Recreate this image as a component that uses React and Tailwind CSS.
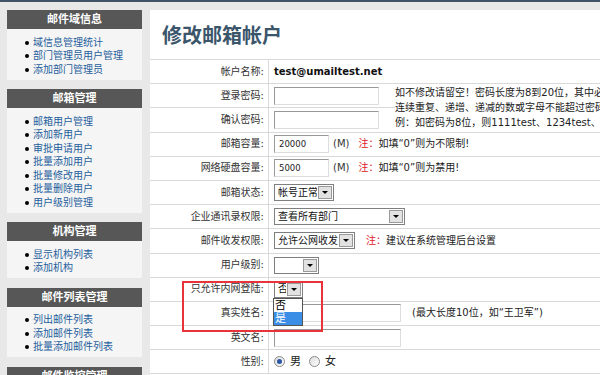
import React from "react";

const menus = [
  { title: "邮件域信息", items: ["域信息管理统计", "部门管理员用户管理", "添加部门管理员"] },
  {
    title: "邮箱管理",
    items: ["邮箱用户管理", "添加新用户", "审批申请用户", "批量添加用户", "批量修改用户", "批量删除用户", "用户级别管理"],
  },
  { title: "机构管理", items: ["显示机构列表", "添加机构"] },
  { title: "邮件列表管理", items: ["列出邮件列表", "添加邮件列表", "批量添加邮件列表"] },
  { title: "邮件监控管理", items: [] },
];

const Menu = ({ title, items }) => (
  <div>
    <div className="h-[19px] bg-[#575757] text-white text-[11px] font-bold flex items-center justify-center">
      {title}
    </div>
    {items.length > 0 && (
      <ul className="bg-[#f5f5f5] pt-[7px] pb-[3px]">
        {items.map((item) => (
          <li key={item} className="flex items-center h-[13.5px] pl-[18px]">
            <span className="w-[4px] h-[4px] rounded-full bg-black mr-[4px]"></span>
            <a className="text-[#1f5e9c]">{item}</a>
          </li>
        ))}
      </ul>
    )}
  </div>
);

const TextInput = ({ w, value }) => (
  <div
    className={`h-[18px] ${w} border border-t-[#999999] border-l-[#999999] border-r-[#dddddd] border-b-[#dddddd] bg-white text-[8.5px] pl-[4px] flex items-center text-[#222]`}
  >
    {value}
  </div>
);

const Select = ({ w, text }) => (
  <div className={`h-[17px] ${w} border border-[#7f7f7f] bg-white flex items-stretch overflow-hidden`}>
    <span className="flex-1 pl-[3px] whitespace-nowrap overflow-hidden flex items-center text-[#111]">{text}</span>
    <span className="w-[14px] m-px bg-[#e2e2e2] border border-[#9a9a9a] flex items-center justify-center shrink-0">
      <span className="w-0 h-0 border-l-[3px] border-r-[3px] border-t-[3px] border-l-transparent border-r-transparent border-t-black"></span>
    </span>
  </div>
);

const Radio = ({ checked }) => (
  <span className="w-[11px] h-[11px] rounded-full border border-[#8a8a8a] bg-gradient-to-br from-[#dcdcdc] to-white flex items-center justify-center">
    {checked && <span className="w-[5px] h-[5px] rounded-full bg-[#2a56a6]"></span>}
  </span>
);

const Label = ({ children }) => (
  <div className="h-[24.2px] border-b border-[#d9d9d9] flex items-center justify-end pr-[4px] text-[#333]">
    {children}
  </div>
);

const Value = ({ children }) => (
  <div className="col-span-2 h-[24.2px] border-b border-l border-[#d9d9d9] flex items-center pl-[5px] whitespace-nowrap">
    {children}
  </div>
);

const Note = ({ children }) => <span className="text-[#e0202a]">注：</span>;

export default function App() {
  return (
    <div className="w-[600px] h-[375px] overflow-hidden bg-[#e8e8e8] border-t-2 border-[#3e5366] font-['DejaVu_Sans','Noto_Sans_CJK_SC',sans-serif] text-[10px] leading-none">
      <div className="flex pt-[8px] pl-[7px] gap-[8px]">
        <aside className="w-[135px] shrink-0 flex flex-col gap-[9.5px]">
          {menus.map((m) => (
            <Menu key={m.title} title={m.title} items={m.items} />
          ))}
        </aside>

        <main className="relative flex-1 bg-white overflow-hidden h-[400px]">
          <div className="h-[49px] flex items-center pl-[12px] text-[20px] font-bold text-[#3b556b] font-['Noto_Sans_CJK_SC',sans-serif]">
            修改邮箱帐户
          </div>

          <div className="grid grid-cols-[118px_127px_1fr] border-t border-[#d9d9d9]">
            <Label>帐户名称:</Label>
            <Value>
              <span className="font-bold text-[#111]">test@umailtest.net</span>
            </Value>

            <Label>登录密码:</Label>
            <div className="h-[24.2px] border-b border-l border-[#d9d9d9] flex items-center pl-[5px]">
              <TextInput w="w-[105px]" />
            </div>
            <div className="row-span-2 border-b border-[#d9d9d9] flex flex-col justify-center whitespace-nowrap leading-[15px] text-[#222]">
              <span>如不修改请留空！密码长度为8到20位，其中必须包含字母和数字，</span>
              <span>连续重复、递增、递减的数或字母不能超过密码长度的一半，</span>
              <span>例：如密码为8位，则1111test、1234test、abcd1234都不合法。</span>
            </div>

            <Label>确认密码:</Label>
            <div className="h-[24.2px] border-b border-l border-[#d9d9d9] flex items-center pl-[5px]">
              <TextInput w="w-[105px]" />
            </div>

            <Label>邮箱容量:</Label>
            <Value>
              <TextInput w="w-[55px]" value="20000" />
              <span className="ml-[4px] text-[#333]">(M)</span>
              <span className="ml-[9px]">
                <Note />
              </span>
              <span className="text-[#222]">如填“0”则为不限制!</span>
            </Value>

            <Label>网络硬盘容量:</Label>
            <Value>
              <TextInput w="w-[55px]" value="5000" />
              <span className="ml-[4px] text-[#333]">(M)</span>
              <span className="ml-[9px]">
                <Note />
              </span>
              <span className="text-[#222]">如填“0”则为禁用!</span>
            </Value>

            <Label>邮箱状态:</Label>
            <Value>
              <Select w="w-[60px]" text="帐号正常" />
            </Value>

            <Label>企业通讯录权限:</Label>
            <Value>
              <Select w="w-[131px]" text="查看所有部门" />
            </Value>

            <Label>邮件收发权限:</Label>
            <Value>
              <Select w="w-[81px]" text="允许公网收发" />
              <span className="ml-[11px]">
                <Note />
              </span>
              <span className="text-[#222]">建议在系统管理后台设置</span>
            </Value>

            <Label>用户级别:</Label>
            <Value>
              <Select w="w-[45px]" text="" />
            </Value>

            <Label>只允许内网登陆:</Label>
            <Value>
              <Select w="w-[29px]" text="否" />
            </Value>

            <Label>真实姓名:</Label>
            <Value>
              <TextInput w="w-[127px]" />
              <span className="ml-[11px] text-[#222]">(最大长度10位，如“王卫军”)</span>
            </Value>

            <Label>英文名:</Label>
            <Value>
              <TextInput w="w-[127px]" />
            </Value>

            <Label>性别:</Label>
            <Value>
              <Radio checked />
              <span className="ml-[5px] text-[11px] text-[#222]">男</span>
              <span className="ml-[8px]">
                <Radio />
              </span>
              <span className="ml-[5px] text-[11px] text-[#222]">女</span>
            </Value>
          </div>

          <div className="absolute left-[123px] top-[288px] w-[30px] border border-[#555] bg-white text-[11px]">
            <div className="h-[13px] flex items-center pl-px text-black">否</div>
            <div className="h-[13px] flex items-center pl-px bg-[#3a8ee6] text-white">是</div>
          </div>

          <div className="absolute left-[32px] top-[271px] w-[141px] h-[51px] border-2 border-[#e8333a]"></div>
        </main>
      </div>
    </div>
  );
}
